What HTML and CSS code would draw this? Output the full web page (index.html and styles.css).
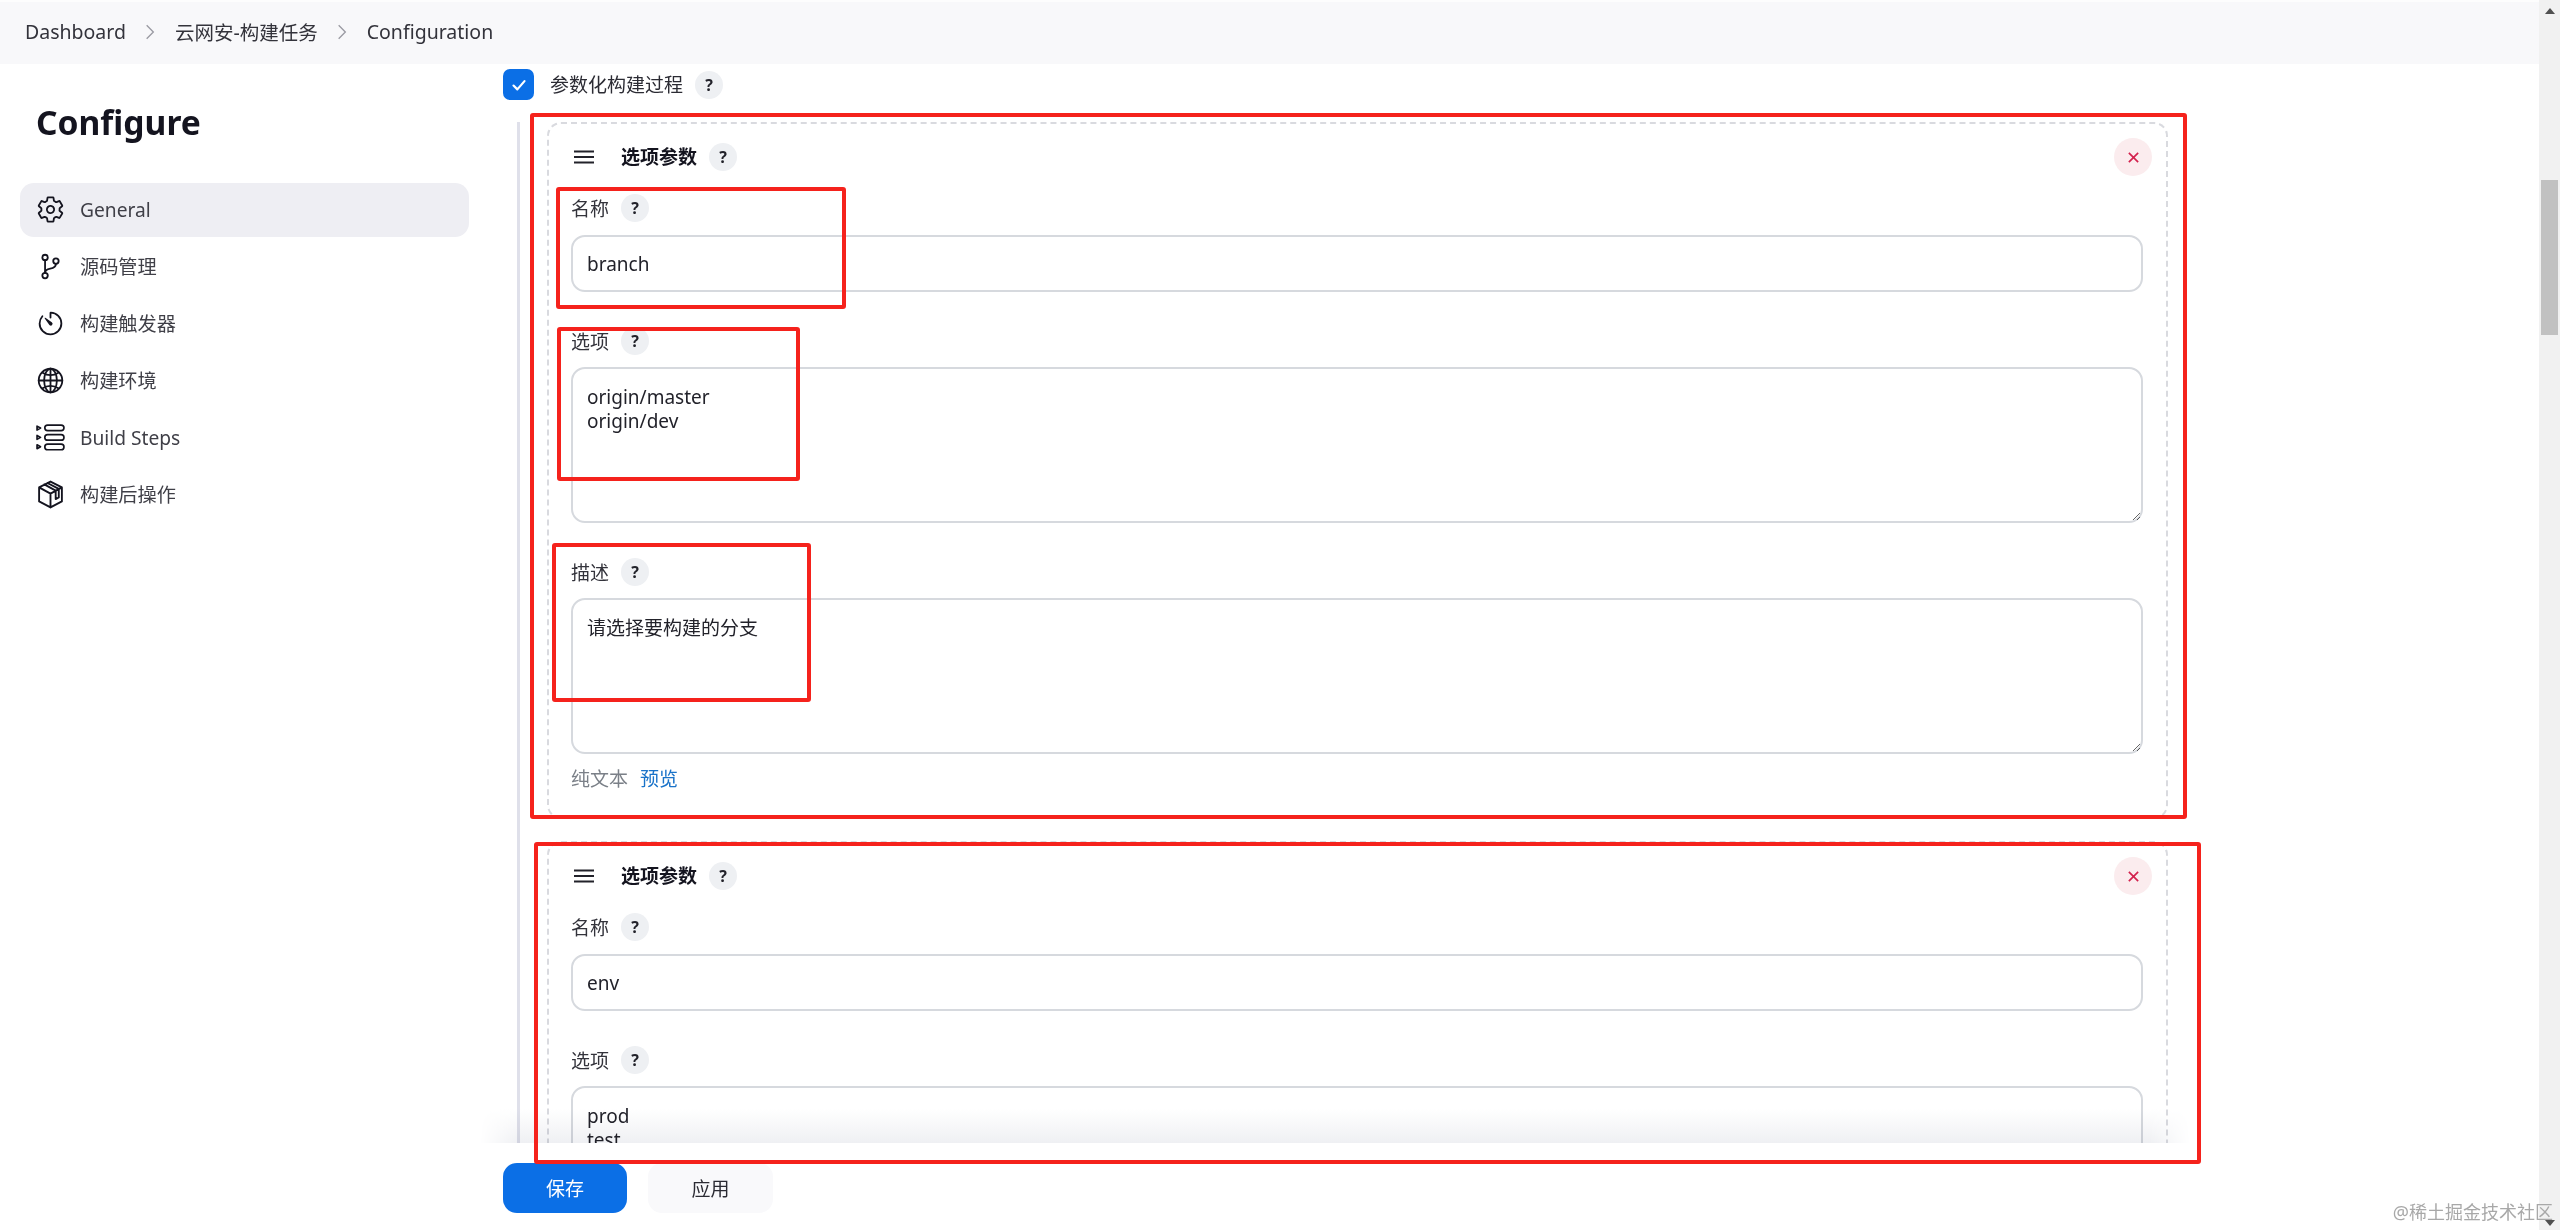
FILE: index.html
```html
<!DOCTYPE html>
<html lang="zh-CN">
<head>
<meta charset="utf-8">
<title>Configuration</title>
<link rel="stylesheet" href="styles.css">
</head>
<body>
<div class="page">
  <nav class="breadcrumbs">
    <span class="crumb">Dashboard</span>
    <svg class="chev" viewBox="0 0 12 20"><path d="M2 2l8 8-8 8"/></svg>
    <span class="crumb">云网安-构建任务</span>
    <svg class="chev" viewBox="0 0 12 20"><path d="M2 2l8 8-8 8"/></svg>
    <span class="crumb">Configuration</span>
  </nav>
  <div class="layout">
    <aside class="sidebar">
      <h1 class="title">Configure</h1>
      <ul class="nav">
        <li class="nav-item active">
          <svg class="ico" viewBox="0 0 512 512"><path d="M262.29 192.31a64 64 0 1057.4 57.4 64.13 64.13 0 00-57.4-57.4zM416.39 256a154.34 154.34 0 01-1.53 20.79l45.21 35.46a10.81 10.81 0 012.45 13.75l-42.77 74a10.81 10.81 0 01-13.14 4.59l-44.9-18.08a16.11 16.11 0 00-15.17 1.75A164.48 164.48 0 01325 400.8a15.94 15.94 0 00-8.82 12.14l-6.73 47.89a11.08 11.08 0 01-10.68 9.17h-85.54a11.11 11.11 0 01-10.69-8.87l-6.72-47.82a16.07 16.07 0 00-9-12.22 155.3 155.3 0 01-21.46-12.57 16 16 0 00-15.11-1.71l-44.89 18.07a10.81 10.81 0 01-13.14-4.58l-42.77-74a10.8 10.8 0 012.45-13.75l38.21-30a16.05 16.05 0 006-14.08c-.36-4.17-.58-8.33-.58-12.5s.21-8.27.58-12.35a16 16 0 00-6.07-13.94l-38.19-30A10.81 10.81 0 0149.48 186l42.77-74a10.81 10.81 0 0113.14-4.59l44.9 18.08a16.11 16.11 0 0015.17-1.75A164.48 164.48 0 01187 111.2a15.94 15.94 0 008.82-12.14l6.73-47.89A11.08 11.08 0 01213.23 42h85.54a11.11 11.11 0 0110.69 8.87l6.72 47.82a16.07 16.07 0 009 12.22 155.3 155.3 0 0121.46 12.57 16 16 0 0015.11 1.71l44.89-18.07a10.81 10.81 0 0113.14 4.58l42.77 74a10.8 10.8 0 01-2.45 13.75l-38.21 30a16.05 16.05 0 00-6.05 14.08c.33 4.14.55 8.3.55 12.47z"/></svg>
          <span>General</span>
        </li>
        <li class="nav-item">
          <svg class="ico" viewBox="0 0 512 512"><circle cx="160" cy="96" r="48"/><circle cx="160" cy="416" r="48"/><path d="M160 368V144"/><circle cx="352" cy="160" r="48"/><path d="M352 208c0 128-192 48-192 160"/></svg>
          <span>源码管理</span>
        </li>
        <li class="nav-item">
          <svg class="ico" viewBox="0 0 512 512"><path d="M112.91 128A191.85 191.85 0 0064 254c-1.18 106.35 85.65 193.8 192 194 106.2.2 192-85.83 192-192 0-104.54-83.55-189.61-187.5-192a4.36 4.36 0 00-4.5 4.37V152"/><path class="solid" d="M233.38 278.63l-79-113a8.13 8.13 0 0111.32-11.32l113 79a32.5 32.5 0 01-37.25 53.26 33.21 33.21 0 01-8.07-7.94z"/></svg>
          <span>构建触发器</span>
        </li>
        <li class="nav-item">
          <svg class="ico" viewBox="0 0 512 512"><path d="M256 48C141.13 48 48 141.13 48 256s93.13 208 208 208 208-93.13 208-208S370.87 48 256 48z"/><path d="M256 48c-58.07 0-112.67 93.13-112.67 208S197.93 464 256 464s112.67-93.13 112.67-208S314.07 48 256 48z"/><path d="M117.33 117.33c38.24 27.15 86.38 43.34 138.67 43.34s100.43-16.19 138.67-43.34M394.67 394.67c-38.24-27.15-86.38-43.34-138.67-43.34s-100.43 16.19-138.67 43.34"/><path d="M256 48v416M464 256H48"/></svg>
          <span>构建环境</span>
        </li>
        <li class="nav-item">
          <svg class="ico ico-steps" viewBox="0 0 28 28"><path d="M1 3l3.4 1.9L1 6.8zM1 12l3.4 1.9L1 15.8zM1 21l3.4 1.9L1 24.8z"/><rect x="8.5" y="2" width="18.5" height="5.4" rx="2.7"/><rect x="8.5" y="11.2" width="18.5" height="5.4" rx="2.7"/><rect x="8.5" y="20.4" width="18.5" height="5.4" rx="2.7"/></svg>
          <span>Build Steps</span>
        </li>
        <li class="nav-item">
          <svg class="ico ico-thin" viewBox="0 0 28 28"><path d="M14 1.5l11 5.6v13.6l-11 5.8-11-5.8V7.1zM3 7.1l11 6 11-6M14 13.1v13.4M8 4.2l11 6v8.2l3-1.5V8.6M11 2.9l11 5.7"/></svg>
          <span>构建后操作</span>
        </li>
      </ul>
    </aside>
    <main class="main">
      <div class="check-row">
        <span class="checkbox"><svg viewBox="0 0 20 20"><path d="M5 10.5l3.5 3.5L15 6.5"/></svg></span>
        <span class="check-label">参数化构建过程</span>
        <span class="help">?</span>
      </div>
      <div class="nested">
        <section class="param">
          <div class="param-head">
            <svg class="handle" viewBox="0 0 20 14"><path d="M0 1.5h20M0 7h20M0 12.5h20"/></svg>
            <strong class="param-title">选项参数</strong>
            <span class="help">?</span>
            <button class="close" type="button"><svg viewBox="0 0 14 14"><path d="M2 2l10 10M12 2L2 12"/></svg></button>
          </div>
          <div class="label"><span>名称</span><span class="help">?</span></div>
          <div class="input">branch</div>
          <div class="label label-gap"><span>选项</span><span class="help">?</span></div>
          <textarea class="area" readonly>origin/master
origin/dev</textarea>
          <div class="label label-gap"><span>描述</span><span class="help">?</span></div>
          <textarea class="area" readonly>请选择要构建的分支</textarea>
          <div class="links"><span class="plain">纯文本</span><span class="preview">预览</span></div>
        </section>
        <section class="param">
          <div class="param-head">
            <svg class="handle" viewBox="0 0 20 14"><path d="M0 1.5h20M0 7h20M0 12.5h20"/></svg>
            <strong class="param-title">选项参数</strong>
            <span class="help">?</span>
            <button class="close" type="button"><svg viewBox="0 0 14 14"><path d="M2 2l10 10M12 2L2 12"/></svg></button>
          </div>
          <div class="label"><span>名称</span><span class="help">?</span></div>
          <div class="input">env</div>
          <div class="label label-gap"><span>选项</span><span class="help">?</span></div>
          <textarea class="area" readonly>prod
test</textarea>
        </section>
      </div>
    </main>
  </div>
</div>
<div class="scrollbar">
  <span class="arrow up"></span>
  <span class="thumb"></span>
  <span class="arrow down"></span>
</div>
<div class="sticker">
  <button class="btn save" type="button">保存</button>
  <button class="btn apply" type="button">应用</button>
</div>
<div class="mark mark-a"></div>
<div class="mark mark-b"></div>
<div class="mark mark-c"></div>
<div class="mark mark-d"></div>
<div class="mark mark-e"></div>
<div class="watermark">@稀土掘金技术社区</div>
</body>
</html>
```

FILE: styles.css
```css
* { box-sizing: border-box; }
html, body { height: 100%; }
body {
  margin: 0;
  height: 1230px;
  overflow: hidden;
  display: flex;
  position: relative;
  background: #fff;
  color: #2b2b33;
  font-family: "Noto Sans", "Noto Sans CJK SC", sans-serif;
  font-size: 19px;
}
.page { flex: 1; min-width: 0; height: 1230px; overflow: hidden; }

.breadcrumbs {
  height: 64px;
  display: flex;
  align-items: center;
  padding: 0 0 3px 25px;
  background: #f8f8fa;
  border-top: 2px solid #fdfdfd;
  font-size: 19.5px;
  color: #33333b;
}
.chev { width: 10px; height: 18px; margin: 0 20px 0 19px; fill: none; stroke: #9a9aa2; stroke-width: 1.6; }

.layout { display: flex; }
.sidebar { width: 503px; padding: 36px 34px 0 20px; flex: none; }
.title {
  margin: 0 0 39px 16px;
  font-size: 33.6px;
  line-height: 44px;
  font-weight: 700;
  color: #14141f;
}
.nav { list-style: none; margin: 0; padding: 0; display: flex; flex-direction: column; gap: 3px; }
.nav-item {
  height: 54px;
  display: flex;
  align-items: center;
  gap: 15px;
  padding: 0 0 2px 16px;
  border-radius: 14px;
  color: #3f3f47;
  font-size: 19.2px;
}
.nav-item.active { background: #eeeef3; }
.ico { width: 29px; height: 29px; flex: none; fill: none; stroke: #14141f; stroke-width: 32; stroke-linecap: round; stroke-linejoin: round; }
.ico-thin { stroke-width: 1.8; }
.ico-steps { stroke-width: 1.6; }
.ico .solid { fill: #14141f; stroke: none; }

.main { flex: 1; min-width: 0; padding: 5px 371px 0 0; }
.check-row { height: 31px; display: flex; align-items: center; }
.checkbox {
  width: 31px; height: 31px;
  border-radius: 7px;
  background: #0b6fe6;
  display: flex; align-items: center; justify-content: center;
}
.checkbox svg { width: 22px; height: 22px; fill: none; stroke: #fff; stroke-width: 2; stroke-linecap: round; stroke-linejoin: round; }
.check-label { margin: 0 12px 0 16px; padding-bottom: 1px; }
.help {
  width: 28px; height: 28px;
  border-radius: 50%;
  background: #eef0f3;
  color: #22222a;
  font-size: 16px;
  font-weight: 700;
  display: inline-flex; align-items: center; justify-content: center;
  flex: none;
}

.nested {
  margin: 22px 0 0 14px;
  padding-left: 27px;
  border-left: 3px solid #dfe0ea;
  display: flex;
  flex-direction: column;
  gap: 22px;
}
.param {
  border: 2px dashed #d9dadf;
  border-radius: 14px;
  padding: 0 23px 24px 22px;
}
.param-head { height: 66px; display: flex; align-items: center; position: relative; }
.handle { width: 20px; height: 14px; margin: 0 27px 0 3px; fill: none; stroke: #22222a; stroke-width: 2; }
.param-title { margin-right: 12px; padding-bottom: 2px; font-size: 19px; font-weight: 700; color: #14141f; }
.close {
  margin-left: auto;
  margin-right: -9px;
  width: 38px; height: 38px;
  padding: 0;
  border: 0;
  border-radius: 50%;
  background: #fbecee;
  display: flex; align-items: center; justify-content: center;
}
.close svg { width: 13px; height: 13px; fill: none; stroke: #d3224e; stroke-width: 1.8; }

.label { height: 36px; display: flex; align-items: center; gap: 12px; margin-bottom: 9px; color: #33333b; }
.label-gap { margin-top: 31px; margin-bottom: 8px; }
.input {
  height: 57px;
  border: 2px solid #d6d9de;
  border-radius: 14px;
  padding-left: 14px;
  display: flex;
  align-items: center;
  color: #22222a;
  background: #fff;
}
.area {
  display: block;
  width: 100%;
  height: 156px;
  border: 2px solid #d6d9de;
  border-radius: 14px;
  padding: 16px 14px;
  font: inherit;
  line-height: 24px;
  color: #22222a;
  background: #fff;
  overflow: hidden;
  outline: none;
}
.links { margin-top: 9px; height: 30px; display: flex; align-items: center; gap: 12px; }
.plain { color: #7b8088; }
.preview { color: #1a73c9; }

.scrollbar {
  flex: none;
  width: 21px;
  height: 1230px;
  background: #f1f1f1;
  display: flex;
  flex-direction: column;
  align-items: center;
  padding-top: 8px;
}
.thumb { width: 17px; height: 155px; margin-top: 166px; background: #c1c1c1; }
.arrow { width: 0; height: 0; border-left: 5px solid transparent; border-right: 5px solid transparent; }
.arrow.up { border-bottom: 6px solid #505050; }
.arrow.down { border-top: 6px solid #505050; margin-top: auto; margin-bottom: 4px; }

.sticker {
  position: absolute;
  left: 480px;
  top: 1143px;
  width: 1710px;
  height: 87px;
  background: #fff;
  display: flex;
  align-items: center;
  gap: 21px;
  padding: 2px 0 0 23px;
}
.sticker::before {
  content: "";
  position: absolute;
  left: 0; right: 0;
  bottom: 100%;
  height: 34px;
  background: linear-gradient(to bottom, #fff, #eff0f3);
  mix-blend-mode: multiply;
  -webkit-mask-image: linear-gradient(to right, transparent, #000 40px, #000 calc(100% - 40px), transparent);
  mask-image: linear-gradient(to right, transparent, #000 40px, #000 calc(100% - 40px), transparent);
}
.btn {
  height: 50px;
  border: 0;
  border-radius: 14px;
  font: inherit;
  padding: 0;
}
.save { width: 124px; background: #0b6fe6; color: #fff; }
.apply { width: 125px; background: #f9f9fb; color: #2b2b33; }

.mark { position: absolute; border: 4px solid #f5221c; border-radius: 3px; pointer-events: none; }
.mark-a { left: 530px; top: 113px; width: 1657px; height: 706px; }
.mark-b { left: 556px; top: 187px; width: 290px; height: 122px; }
.mark-c { left: 557px; top: 327px; width: 243px; height: 154px; }
.mark-d { left: 552px; top: 543px; width: 259px; height: 159px; }
.mark-e { left: 534px; top: 842px; width: 1667px; height: 322px; }

.watermark {
  position: absolute;
  right: 7px;
  bottom: 6px;
  font-size: 18px;
  line-height: 24px;
  color: #a8a8a8;
}
```
